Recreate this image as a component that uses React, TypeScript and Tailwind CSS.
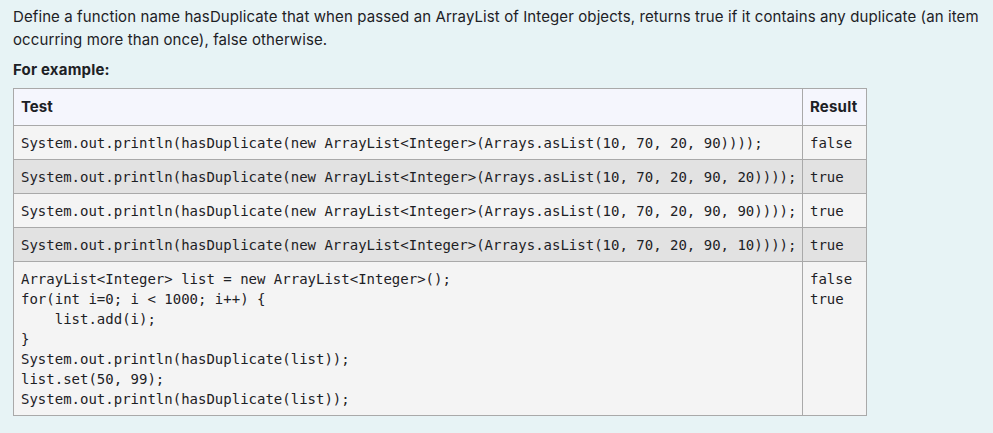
import React from 'react';

const rows = [
  { test: 'System.out.println(hasDuplicate(new ArrayList<Integer>(Arrays.asList(10, 70, 20, 90))));', result: 'false' },
  { test: 'System.out.println(hasDuplicate(new ArrayList<Integer>(Arrays.asList(10, 70, 20, 90, 20))));', result: 'true' },
  { test: 'System.out.println(hasDuplicate(new ArrayList<Integer>(Arrays.asList(10, 70, 20, 90, 90))));', result: 'true' },
  { test: 'System.out.println(hasDuplicate(new ArrayList<Integer>(Arrays.asList(10, 70, 20, 90, 10))));', result: 'true' },
  {
    test: `ArrayList<Integer> list = new ArrayList<Integer>();
for(int i=0; i < 1000; i++) {
    list.add(i);
}
System.out.println(hasDuplicate(list));
list.set(50, 99);
System.out.println(hasDuplicate(list));`,
    result: `false
true`,
  },
];

const mono = "font-['DejaVu_Sans_Mono',monospace] text-[14px] leading-[20px] whitespace-pre m-0";

export default function App() {
  return (
    <div className="min-h-[433px] overflow-hidden bg-[#e7f3f5] pl-[13px] pt-[5px] text-[#1d2125] font-['Inter',sans-serif] text-[15px]">
      <p className="leading-[23px] m-0 w-[978px] tracking-[0.1px]">
        Define a function name hasDuplicate that when passed an ArrayList of Integer objects, returns true if it contains any duplicate (an item occurring more than once), false otherwise.
      </p>
      <p className="font-bold leading-[23px] mt-[7px] mb-[7px] tracking-[0.2px]">For example:</p>
      <table className="border-collapse table-fixed w-[853px]">
        <colgroup>
          <col className="w-[789px]" />
          <col className="w-[64px]" />
        </colgroup>
        <thead>
          <tr className="bg-[#f5f6fd]">
            <th className="border border-[#a9a9a9] text-left px-[7px] h-[37px] font-bold">Test</th>
            <th className="border border-[#a9a9a9] text-left pl-[7px] pr-0 h-[37px] font-bold tracking-[0.2px]">Result</th>
          </tr>
        </thead>
        <tbody>
          {rows.map((r, i) => (
            <tr key={i} className={i % 2 === 1 ? 'bg-[#e2e2e2]' : 'bg-[#f4f4f4]'}>
              <td className="border border-[#a9a9a9] align-top pl-[7px] pr-0 pt-[7px] pb-[6px]">
                <pre className={mono}>{r.test}</pre>
              </td>
              <td className="border border-[#a9a9a9] align-top pl-[7px] pr-0 pt-[7px] pb-[6px]">
                <pre className={mono}>{r.result}</pre>
              </td>
            </tr>
          ))}
        </tbody>
      </table>
    </div>
  );
}
